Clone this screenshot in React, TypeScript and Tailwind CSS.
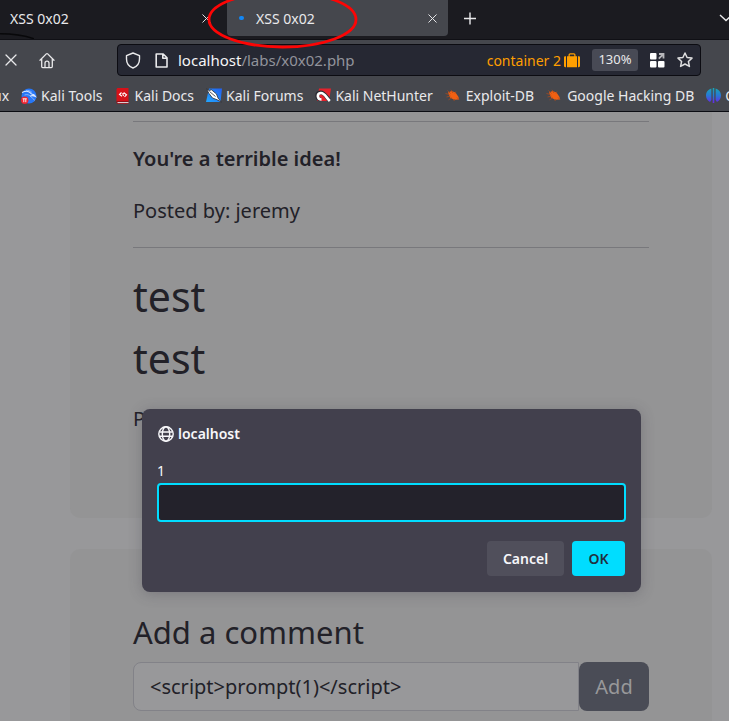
import React from "react";

const UI = "font-['Noto_Sans',sans-serif]";

function CloseIcon({ size }: { size: number }) {
  return (
    <svg width={size} height={size} viewBox="0 0 12 12" fill="none" stroke="currentColor" strokeWidth="1.3" strokeLinecap="round">
      <path d="M1 1l10 10M11 1L1 11" />
    </svg>
  );
}

function HomeIcon() {
  return (
    <svg width="16" height="17" viewBox="0 0 16 17" fill="none" stroke="currentColor" strokeWidth="1.3" strokeLinejoin="round" strokeLinecap="round">
      <path d="M1 8.2L7.300 1.900c.4-.4 1-.4 1.400 0L15 8.200M2.700 7v7.600c0 .6.4 1 1 1h8.600c.6 0 1-.4 1-1V7M6 15.500v-4.300c0-1.100.9-2 2-2s2 .9 2 2v4.300" />
    </svg>
  );
}

function ShieldIcon() {
  return (
    <svg width="16" height="17" viewBox="0 0 16 17" fill="none" stroke="currentColor" strokeWidth="1.4" strokeLinejoin="round">
      <path d="M8 1L14.500 3.700v3.300c0 4-2.600 7.700-6.500 9-3.900-1.300-6.500-5-6.500-9V3.700z" />
    </svg>
  );
}

function PageIcon() {
  return (
    <svg width="13" height="15" viewBox="0 0 13 15" fill="none" stroke="currentColor" strokeWidth="1.6" strokeLinejoin="round">
      <path d="M1.200 1h7l3.800 3.800V14H1.200zM7.800 1v4.200H12" />
    </svg>
  );
}

function BriefcaseIcon() {
  return (
    <svg width="16" height="15" viewBox="0 0 16 15" fill="#ff9f00">
      <path d="M0 4.500c0-.8.500-1.300 1.300-1.300H2v11h-.7C.5 14.200 0 13.700 0 13zM14 3.200h.7c.8 0 1.300.5 1.300 1.300V13c0 .7-.5 1.200-1.300 1.200H14zM3 3.200h1.500V2C4.500 1 5.300.3 6.200.3h3.600c1 0 1.700.7 1.700 1.700v1.200H13v11H3zM5.700 3.200h4.600V2c0-.3-.2-.5-.5-.5H6.200c-.3 0-.5.2-.5.500z" />
    </svg>
  );
}

function GridIcon() {
  return (
    <svg width="15" height="15" viewBox="0 0 15 15" fill="#fff">
      <rect width="6.5" height="6.5" rx="1" />
      <rect y="8" width="6.5" height="6.5" rx="1" />
      <rect x="8" y="8" width="6.5" height="6.5" rx="1" />
      <path d="M8.800 5.700L13 1.500M9 1h4.500v4.500" fill="none" stroke="#b7b7bb" strokeWidth="1.8" />
    </svg>
  );
}

function StarIcon() {
  return (
    <svg width="16" height="16" viewBox="0 0 16 16" fill="none" stroke="#dededf" strokeWidth="1.5" strokeLinejoin="round">
      <path d="M8 1l2.100 4.500 4.900.6-3.600 3.400 1 4.900L8 12l-4.400 2.400 1-4.900L1 6.100l4.900-.6z" />
    </svg>
  );
}

function GlobeIcon() {
  return (
    <svg width="16" height="16" viewBox="0 0 16 16" fill="none" stroke="currentColor" strokeWidth="1.4">
      <circle cx="8" cy="8" r="7.200" />
      <ellipse cx="8" cy="8" rx="3.700" ry="7.200" />
      <path d="M1.200 6h13.600M1.200 10.200h13.600" />
    </svg>
  );
}

function ToolsIcon() {
  return (
    <svg width="16" height="16" viewBox="0 0 16 16">
      <circle cx="8" cy="8" r="7.500" fill="#2777f6" />
      <path d="M1 4.500c4-2 7.500-1.500 9.500 1.500 2 .2 3.200 1 4 2.500-2-1-4-1-5.500-.3" fill="none" stroke="#dce9ff" strokeWidth="1.1" />
      <path d="M3.500 7c3-1 5 0 6 1.500s3 1.500 4 4M5 2.500c2.500-.4 4.500.4 6 2" fill="none" stroke="#a9caff" strokeWidth=".7" />
      <circle cx="3.700" cy="12.200" r="3.700" fill="#ee2430" />
      <path d="M1.600 10.800h4.200M2.800 10.800v3.400M4.800 10.800v3.400" stroke="#fff" strokeWidth=".9" />
    </svg>
  );
}

function DocsIcon() {
  return (
    <svg width="16" height="16" viewBox="0 0 16 16">
      <path d="M3 0h10.500v13.500h-12v-12C1.500.6 2.100 0 3 0z" fill="#d51119" />
      <path d="M1.500 13h12v3H3c-.9 0-1.500-.6-1.500-1.500z" fill="#8f1119" />
      <path d="M2.500 14.100h11v1h-11z" fill="#e4e4e6" />
      <path d="M6.500 4.500L4.500 6.500l2.500 1.800M9.800 4.800L8 5.500c-1 .8 1 1.500.3 2.500M9.500 8.800l2-2-2-1.500" fill="none" stroke="#fff" strokeWidth="1.1" />
    </svg>
  );
}

function ForumsIcon() {
  return (
    <svg width="16" height="15" viewBox="0 0 16 15">
      <defs>
        <linearGradient id="forums" x1="0" y1="1" x2="1" y2="0">
          <stop offset="0" stopColor="#22a7ff" />
          <stop offset="1" stopColor="#2260f0" />
        </linearGradient>
      </defs>
      <path d="M3 .500h13L14.500 14H0z" fill="url(#forums)" />
      <path d="M.5.800L3 2.500l2.500-.7 5 4.200 1.500 4 3.500 4.200-4.500-2.500L6.500 10 3 5.500z" fill="#fff" stroke="#2a2c34" strokeWidth=".8" />
      <path d="M3.500 3.500l6 5" stroke="#2a2c34" strokeWidth=".8" />
    </svg>
  );
}

function NetHunterIcon() {
  return (
    <svg width="16" height="15" viewBox="0 0 16 15">
      <path d="M4 .500h12L14 13H2z" fill="#e5222c" />
      <path d="M5.500 11.500C1.500 11 .8 5 5.500 4.500c4-.3 5.500 4 9 8" fill="none" stroke="#2c2c34" strokeWidth="4" />
      <path d="M6.500 11.500C2 11.500 1.500 5.500 5.800 5c3.700-.3 5 4 9 8" fill="none" stroke="#fff" strokeWidth="2.6" />
    </svg>
  );
}

function BugIcon() {
  return (
    <svg width="17" height="13" viewBox="0 0 17 13">
      <path d="M3 3.500L6.500 2l4 1.500 3 4.500.5 2.500-5 .3L5 8.500z" fill="#f26012" />
      <path d="M.5 4.500l4 1M2.500 1.500l3 3M6 .8L8 4M11 2.500L10 4.500M1.500 8l4-1M3.500 10.800l3.500-2M9 12l.500-2M14 10.500l-2-2" stroke="#a84a1e" strokeWidth=".8" />
    </svg>
  );
}

function SplitIcon() {
  return (
    <svg width="15" height="15" viewBox="0 0 15 15">
      <defs>
        <linearGradient id="split" x1="0" y1="0" x2="0" y2="1">
          <stop offset="0" stopColor="#17a6b4" />
          <stop offset=".5" stopColor="#2878d5" />
          <stop offset="1" stopColor="#6a26e8" />
        </linearGradient>
      </defs>
      <path d="M5.400.5v11.500L4 14C1.500 12.500 0 10.300 0 7.500 0 4 2.200 1.300 5.400.5zM9.600.5C12.800 1.300 15 4 15 7.500c0 2.800-1.500 5-4 6.500l-1.400-2zM6.700 0h1.600v15H6.700z" fill="url(#split)" />
    </svg>
  );
}

function Bookmark({ icon, label }: { icon: React.ReactNode; label: string }) {
  return (
    <a href="#" className="flex shrink-0 items-center gap-1 whitespace-nowrap">
      {icon}
      {label}
    </a>
  );
}

function TabStrip() {
  return (
    <div className="relative flex h-10 items-start border-b border-[#101015] bg-[#1b1b20]">
      <svg className="absolute bottom-0 left-0" width="34" height="6" viewBox="0 0 34 6" fill="none">
        <path d="M0 .800c14 0 24 1.500 34 5" stroke="#08080a" strokeWidth="1.400" />
      </svg>
      <div className="flex h-9 w-[227px] shrink-0 items-center justify-between pr-4 pl-[10px]">
        <span>XSS 0x02</span>
        <button aria-label="Close tab"><CloseIcon size={9} /></button>
      </div>
      <div className="relative flex h-9 w-[221px] shrink-0 items-center rounded-b bg-[#45474d] pr-[11px] pl-3">
        <span className="h-1 w-[5px] rounded-full bg-[#1287f5]" />
        <span className="ml-3 grow">XSS 0x02</span>
        <button aria-label="Close tab"><CloseIcon size={9} /></button>
        <svg className="absolute -top-[9px] -left-5 z-10" width="152" height="58" viewBox="0 0 152 58" fill="none">
          <ellipse cx="75.500" cy="28.500" rx="73.500" ry="27.500" stroke="#fd0505" strokeWidth="2.8" />
        </svg>
      </div>
      <button aria-label="New tab" className="mt-3 ml-4">
        <svg width="12" height="13" viewBox="0 0 12 13" stroke="currentColor" strokeWidth="1.4"><path d="M6 .5v12M0 6.500h12" /></svg>
      </button>
      <button aria-label="List all tabs" className="mt-3.5 -mr-1 ml-auto">
        <svg width="14" height="8" viewBox="0 0 14 8" fill="none" stroke="currentColor" strokeWidth="1.4"><path d="M1 1l6 5.500L13 1" /></svg>
      </button>
    </div>
  );
}

function NavBar() {
  return (
    <div className="flex h-10 items-center pr-7 pl-[5px]">
      <button aria-label="Stop"><CloseIcon size={12} /></button>
      <button aria-label="Home" className="ml-[22px]"><HomeIcon /></button>
      <div className="ml-[62px] flex h-8 min-w-0 grow items-center rounded border border-[#0c0c12] bg-[#262833] px-[7px]">
        <ShieldIcon />
        <span className="ml-[14px]"><PageIcon /></span>
        <span className="ml-[10px] grow text-[15px] text-[#f5f5f7]">localhost<span className="text-[#92939b]">/labs/x0x02.php</span></span>
        <span className="mr-[3px] text-[#ff9f00]">container 2</span>
        <BriefcaseIcon />
        <button className="mx-3 h-[22px] w-[46px] rounded-[3px] bg-[#484a55] text-[13px]">130%</button>
        <GridIcon />
        <button aria-label="Bookmark this page" className="ml-3"><StarIcon /></button>
      </div>
    </div>
  );
}

function Dialog() {
  return (
    <div role="dialog" aria-label="localhost" className={`absolute top-[297px] right-[88px] left-[142px] z-10 rounded-lg bg-[#42404d] px-[15px] pt-4 pb-4 text-[14px] leading-[18px] text-[#f7f7fa] shadow-[0_2px_14px_rgba(58,57,68,0.3)] ${UI}`}>
      <div className="flex items-center gap-1 pl-px font-semibold"><GlobeIcon />localhost</div>
      <label htmlFor="answer" className="mt-[19px] block">1</label>
      <input id="answer" className="mt-[3px] block h-[39px] w-full rounded border-2 border-[#00ddff] bg-[#23222b] px-2 outline-none" />
      <div className="mt-[19px] flex justify-end gap-2 pr-px font-semibold">
        <button className="h-[35px] w-[77px] rounded bg-[#504f5b]">Cancel</button>
        <button className="h-[35px] w-[53px] rounded bg-[#00ddff] text-[#203040]">OK</button>
      </div>
    </div>
  );
}

export default function App() {
  return (
    <div className={`flex h-screen flex-col overflow-hidden bg-[#98989a] ${UI}`}>
      <header className="relative z-20 shrink-0 overflow-hidden border-b border-[#0b0c12] bg-[#45474d] text-[14px] text-[#e9e9eb]">
        <TabStrip />
        <NavBar />
        <nav className="flex h-[31px] items-center gap-3">
          <a href="#" className="-ml-[7px] shrink-0">ux</a>
          <Bookmark icon={<ToolsIcon />} label="Kali Tools" />
          <Bookmark icon={<DocsIcon />} label="Kali Docs" />
          <Bookmark icon={<ForumsIcon />} label="Kali Forums" />
          <Bookmark icon={<NetHunterIcon />} label="Kali NetHunter" />
          <Bookmark icon={<BugIcon />} label="Exploit-DB" />
          <Bookmark icon={<BugIcon />} label="Google Hacking DB" />
          <Bookmark icon={<SplitIcon />} label="OffSec" />
        </nav>
      </header>
      <main className="relative grow pr-[17px] pl-[70px] text-[20px] leading-[30px] text-[#222128]">
        <section className="h-[406px] rounded-b-[10px] bg-[#949495] px-[63px] pt-[9px]">
          <hr className="border-[#78787c]" />
          <p className="mt-[22px] font-semibold">You're a terrible idea!</p>
          <p className="mt-[22px]">Posted by: jeremy</p>
          <hr className="mt-[21px] border-[#78787c]" />
          <h1 className="mt-[22px] text-[41px] leading-[52px]">test</h1>
          <h1 className="mt-[10px] text-[41px] leading-[52px]">test</h1>
          <p className="mt-[20px]">Posted by:</p>
        </section>
        <section className="mt-[31px] h-[240px] rounded-t-[10px] bg-[#949495] px-[63px] pt-[62px]">
          <h2 className="text-[31px] leading-[42px]"><label htmlFor="comment">Add a comment</label></h2>
          <form className="mt-[9px] flex h-[49px]">
            <input id="comment" defaultValue="<script>prompt(1)</script>" className="min-w-0 grow rounded-l-lg border border-[#828288] bg-[#98989a] px-4 outline-none" />
            <button type="button" className="w-[70px] rounded-lg bg-[#4a4c56] text-[#98989a]">Add</button>
          </form>
        </section>
        <Dialog />
      </main>
    </div>
  );
}
